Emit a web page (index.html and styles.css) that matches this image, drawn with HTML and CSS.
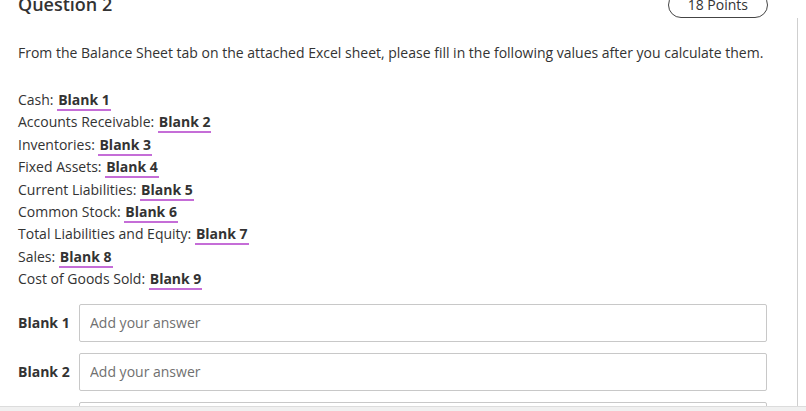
FILE: index.html
```html
<!DOCTYPE html>
<html>
<head>
<meta charset="utf-8">
<link rel="stylesheet" href="styles.css">
</head>
<body>
<div class="page">
  <div class="header">
    <h2 class="title">Question 2</h2>
    <span class="points">18 Points</span>
  </div>
  <div class="content">
    <p class="prompt">From the Balance Sheet tab on the attached Excel sheet, please fill in the following values after you calculate them.</p>
    <div class="list">
      <div class="line">Cash: <b class="blank">Blank 1</b></div>
      <div class="line">Accounts Receivable: <b class="blank">Blank 2</b></div>
      <div class="line">Inventories: <b class="blank">Blank 3</b></div>
      <div class="line">Fixed Assets: <b class="blank">Blank 4</b></div>
      <div class="line">Current Liabilities: <b class="blank">Blank 5</b></div>
      <div class="line">Common Stock: <b class="blank">Blank 6</b></div>
      <div class="line">Total Liabilities and Equity: <b class="blank">Blank 7</b></div>
      <div class="line">Sales: <b class="blank">Blank 8</b></div>
      <div class="line">Cost of Goods Sold: <b class="blank">Blank 9</b></div>
    </div>
    <div class="answers">
      <div class="answer"><span class="label">Blank 1</span><input class="field" type="text" placeholder="Add your answer"></div>
      <div class="answer"><span class="label">Blank 2</span><input class="field" type="text" placeholder="Add your answer"></div>
      <div class="answer"><span class="label">Blank 3</span><input class="field" type="text" placeholder="Add your answer"></div>
    </div>
  </div>
</div>
<div class="footer"></div>
</body>
</html>
```
FILE: styles.css
```css
html, body {
  margin: 0;
  padding: 0;
  background: #ffffff;
  overflow: hidden;
  height: 411px;
}
body {
  font-family: "Open Sans", "Liberation Sans", sans-serif;
  color: #333333;
  font-size: 14px;
}
.page {
  width: 798px;
  margin-top: -13px;
}
.header {
  display: flex;
  justify-content: space-between;
  align-items: flex-end;
  padding: 0 30px 0 18px;
  height: 31px;
}
.title {
  margin: 0 0 2px;
  font-size: 18px;
  font-weight: 600;
  line-height: 24px;
  color: #333333;
}
.points {
  border: 1px solid #444444;
  border-radius: 14px;
  padding: 3px 19px;
  font-size: 14px;
  font-weight: 400;
  line-height: 18px;
  color: #333333;
}
.content {
  border-right: 1px solid #cfcfcf;
  padding: 24px 30px 0 18px;
}
.prompt {
  margin: 0 0 25px;
  line-height: 22px;
}
.list {
  display: flex;
  flex-direction: column;
}
.line {
  line-height: 22.4px;
}
.blank {
  font-weight: 700;
  border-bottom: 2px solid #c56dd7;
  padding: 0 1px;
}
.answers {
  display: flex;
  flex-direction: column;
  gap: 11px;
  margin-top: 13px;
}
.answer {
  display: flex;
  align-items: center;
  gap: 9px;
}
.label {
  font-weight: 700;
  width: 52px;
}
.field {
  flex: 1;
  height: 38px;
  box-sizing: border-box;
  border: 1px solid #c8c8c8;
  border-radius: 2px;
  padding: 0 10px;
  font-family: "Open Sans", "Liberation Sans", sans-serif;
  font-size: 14px;
  color: #333333;
  outline: none;
}
.field::placeholder {
  color: #707070;
}
.footer {
  position: fixed;
  left: 0;
  right: 0;
  bottom: 0;
  height: 4px;
  background: #f0f0f0;
  border-top: 1px solid #dcdcdc;
}
```
